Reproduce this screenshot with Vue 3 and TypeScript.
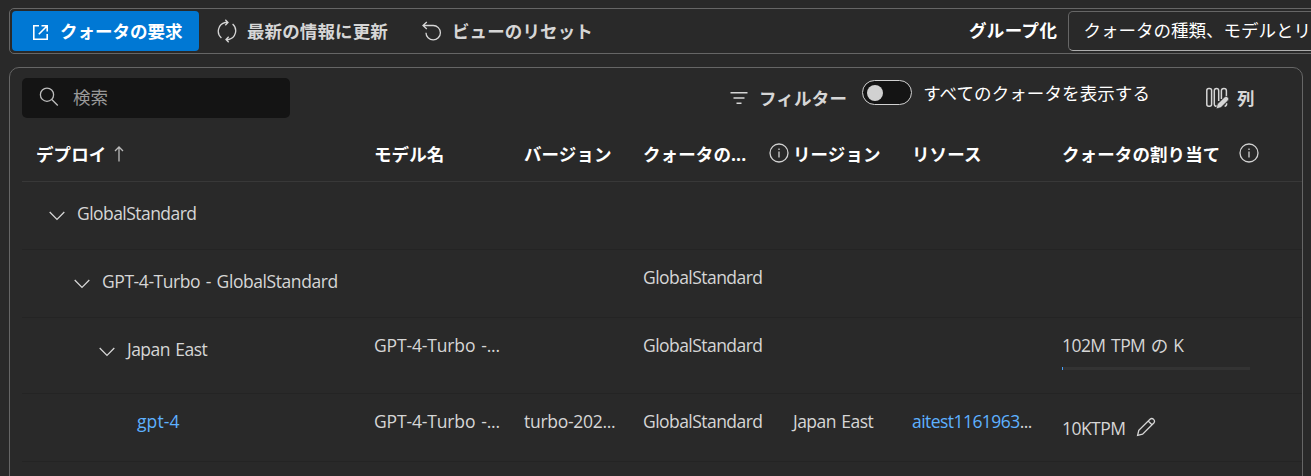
<script setup lang="ts">
interface Row {
  kind: string
  label: string
  level: number
  model?: string
  version?: string
  type?: string
  region?: string
  resource?: string
  quota?: string
  used?: number
  editable?: boolean
}

const rows: Row[] = [
  { kind: 'group', label: 'GlobalStandard', level: 0 },
  { kind: 'group', label: 'GPT-4-Turbo - GlobalStandard', level: 1, type: 'GlobalStandard' },
  { kind: 'usage', label: 'Japan East', level: 2, model: 'GPT-4-Turbo -...', type: 'GlobalStandard', quota: '102M TPM の K', used: 0.54 },
  { kind: 'leaf', label: 'gpt-4', level: 3, model: 'GPT-4-Turbo -...', version: 'turbo-202...', type: 'GlobalStandard', region: 'Japan East', resource: 'aitest1161963', quota: '10KTPM', editable: true },
]
</script>

<template>
  <div class="page">
    <div class="toolbar">
      <button class="primary">
        <svg class="open-icon" width="15" height="15" viewBox="0 0 15 15"><path d="M6 .8H.8v13.4h13.4V9M8.5.8h5.7v5.7M14 1 5.8 9.2" /></svg>
        <span>クォータの要求</span>
      </button>
      <button class="tool refresh">
        <svg width="20" height="24" viewBox="0 0 20 24"><path d="M4.4 18.9A8.9 8.9 0 0 1 8.2 3.5H11M8.3.8 11 3.5 8.3 6.3M15.6 5.1A8.9 8.9 0 0 1 11.8 20.5H9M11.7 17.7 9 20.5 11.7 23.2" /></svg>
        <span>最新の情報に更新</span>
      </button>
      <button class="tool reset">
        <svg width="20" height="20" viewBox="0 0 20 20"><path d="M4.8 1 1 4.5 4.8 8M1 4.5H11.2A7.2 7.2 0 1 1 4 11.7" /></svg>
        <span>ビューのリセット</span>
      </button>
      <span class="group-label">グループ化</span>
      <div class="select">クォータの種類、モデルとリ</div>
    </div>

    <div class="panel">
      <div class="filters">
        <div class="search">
          <svg width="20" height="20" viewBox="0 0 20 20"><circle cx="8" cy="7.7" r="6.6" /><path d="m12.8 12.5 6 6" /></svg>
          <span>検索</span>
        </div>
        <button class="tool filter">
          <svg width="18" height="14" viewBox="0 0 18 14"><path d="M.5 1.7h17M3.5 7h11M6.5 12.3h5" /></svg>
          <span>フィルター</span>
        </button>
        <div class="switch"><i></i></div>
        <span class="switch-label">すべてのクォータを表示する</span>
        <button class="tool columns">
          <svg width="24" height="24" viewBox="0 0 24 24">
            <rect x="1.8" y="2.6" width="4.8" height="17.6" rx="2" />
            <path d="M13 19.7q-3.7 1.5-3.7-1.7V4.8q0-2.2 2.2-2.2t2.2 2.2V15M16.4 13V4.8q0-2.2 2.5-2.2t2.5 2.2V10" />
            <path d="M21.6 17.2V18q0 2-2 2.2" />
            <path class="solid" d="m11.2 22.8 1.2-4.7 7-6.9a2.4 2.4 0 0 1 3.5 3.5l-7 6.9z" />
          </svg>
          <span>列</span>
        </button>
      </div>

      <div class="row head">
        <div class="cell">デプロイ<svg class="sort" width="10" height="16" viewBox="0 0 10 16"><path d="M5 15.5V1M1 5l4-4 4 4" /></svg></div>
        <div class="cell">モデル名</div>
        <div class="cell">バージョン</div>
        <div class="cell">クォータの...<svg class="info" width="20" height="20" viewBox="0 0 20 20"><circle cx="10" cy="10" r="9" /><path d="M10 8.5v6M10 5.4v1.5" /></svg></div>
        <div class="cell">リージョン</div>
        <div class="cell">リソース</div>
        <div class="cell">クォータの割り当て<svg class="info" width="20" height="20" viewBox="0 0 20 20"><circle cx="10" cy="10" r="9" /><path d="M10 8.5v6M10 5.4v1.5" /></svg></div>
      </div>

      <div v-for="row in rows" :key="row.label" class="row" :class="row.kind">
        <div class="cell name" :class="'level' + row.level">
          <svg v-if="row.kind !== 'leaf'" class="chevron" width="16" height="10" viewBox="0 0 16 10"><path d="m.7 1 7.3 7.4L15.3 1" /></svg>
          <a v-if="row.kind === 'leaf'">{{ row.label }}</a>
          <span v-else>{{ row.label }}</span>
        </div>
        <div class="cell model">{{ row.model }}</div>
        <div class="cell version">{{ row.version }}</div>
        <div class="cell">{{ row.type }}</div>
        <div class="cell region">{{ row.region }}</div>
        <div class="cell resource"><template v-if="row.resource"><a>{{ row.resource }}</a>...</template></div>
        <div class="cell quota">
          <span class="amount">{{ row.quota }}</span>
          <div v-if="row.used" class="bar"><i :style="{ width: row.used + '%' }"></i></div>
          <svg v-if="row.editable" class="edit" width="20" height="20" viewBox="0 0 20 20"><path d="m1.6 18.4 1.2-5L14 2.2a2.7 2.7 0 0 1 3.8 3.8L6.6 17.2zM12.2 4l3.8 3.8" /></svg>
        </div>
      </div>
    </div>
  </div>
</template>

<style>
body { background: #292929; overflow: hidden; }
</style>

<style scoped>
* { box-sizing: border-box; }
.page {
  height: 476px;
  padding: 8px 0 0 9px;
  overflow: hidden;
  background: #292929;
  color: #d6d6d6;
  font-family: "Open Sans", "Noto Sans CJK JP", sans-serif;
  font-size: 17.5px;
  line-height: 24px;
  white-space: nowrap;
}
svg { flex: none; fill: none; stroke: currentColor; stroke-width: 1.3; }
button { font: inherit; font-weight: 700; border: 0; padding: 0; background: none; color: inherit; display: flex; align-items: center; }
.toolbar {
  display: flex;
  align-items: center;
  width: 1340px;
  height: 46px;
  padding-left: 2px;
  border: 1px solid #666;
  border-radius: 5px;
}
.primary { width: 187px; height: 40px; padding-left: 21px; background: #0078d4; color: #fff; border-radius: 4px; }
.primary svg { margin: 3px 12px 0 0; stroke-width: 1.6; }
.tool { letter-spacing: .12px; }
.refresh { margin-left: 18px; }
.refresh svg { margin-right: 10px; }
.reset { margin-left: 34px; }
.reset svg { margin-right: 10px; }
.group-label { margin-left: 376px; padding-bottom: 2px; color: #fff; font-weight: 700; letter-spacing: .4px; }
.select {
  flex: none;
  width: 276px;
  height: 40px;
  margin-left: 11px;
  padding: 6px 14px;
  overflow: hidden;
  border: 1px solid #666;
  border-bottom-color: #adadad;
  border-radius: 5px;
  color: #fff;
}
.panel { width: 1294px; height: 430px; margin-top: 13px; border: 1px solid #666; border-radius: 10px; padding-left: 12px; }
.filters { display: flex; height: 59px; padding-top: 10px; }
.search { display: flex; width: 268px; height: 40px; padding: 7px 17px; border-radius: 5px; background: #141414; color: #999; }
.search svg { margin: 2px 14px 0 0; color: #bdbdbd; }
.filter { height: 40px; margin-left: 440px; letter-spacing: .2px; }
.filter svg { margin-right: 11px; stroke-width: 1.5; }
.switch { width: 50px; height: 25px; margin: 2px 0 0 15px; border: 1px solid #d1d1d1; border-radius: 13px; background: #141414; padding: 4px; }
.switch i { display: block; width: 16px; height: 16px; border-radius: 50%; background: #d1d1d1; }
.switch-label { margin: 3px 0 0 11px; color: #fff; letter-spacing: .1px; }
.columns { height: 40px; margin-left: 55px; }
.columns svg { margin-right: 8px; stroke-width: 1.5; }
.columns .solid { fill: currentColor; stroke: #292929; stroke-width: .6; }
.row {
  display: grid;
  grid-template-columns: 338px 150px 119px 150px 119px 150px 1fr;
  height: 68px;
  padding-left: 14px;
  border-bottom: 1px solid #242424;
  letter-spacing: -.55px;
  word-spacing: 1.5px;
}
.cell { display: flex; align-items: center; height: 53px; }
.head { height: 55px; border-color: #383838; color: #fff; font-weight: 700; word-spacing: 0; }
.head .cell { height: 54px; letter-spacing: .1px; }
.sort { margin-left: 8px; color: #bbb; }
.info { margin: 0 4px 3px auto; color: #d1d1d1; stroke-width: 1.3; }
.head .cell:last-child .info { margin: 0 0 3px 19px; }
.name { height: 61px; }
.model { letter-spacing: -.15px; }
.version { letter-spacing: -.28px; }
.level0 { padding-left: 13px; }
.level1 { padding-left: 38px; letter-spacing: -.43px; }
.level2 { padding-left: 63px; }
.level3 { padding-left: 101px; height: 53px; letter-spacing: .1px; }
.chevron { margin: 7px 12px 0 0; }
a { color: #5eb1ff; }
.usage { height: 76px; }
.usage .quota { display: block; padding-top: 15px; }
.usage .amount { display: block; }
.bar { width: 188px; height: 3px; margin-top: 10px; background: #333; }
.bar i { display: block; height: 3px; background: #479ef5; }
.leaf .quota { height: 67px; }
.edit { margin: 0 0 1px 11px; }
</style>
